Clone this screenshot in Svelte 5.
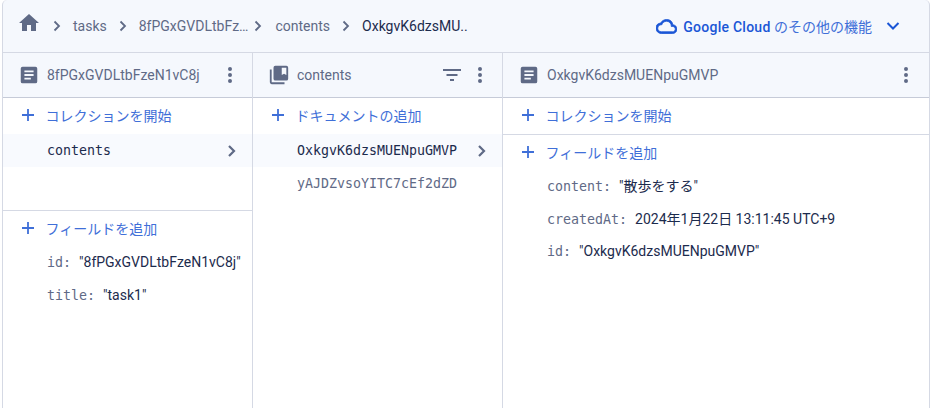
<script>
  const leftFields = [
    { key: 'id', value: '"8fPGxGVDLtbFzeN1vC8j"' },
    { key: 'title', value: '"task1"' }
  ]
  const rightFields = [
    { key: 'content', value: '"散歩をする"' },
    { key: 'createdAt', value: '2024年1月22日 13:11:45 UTC+9' },
    { key: 'id', value: '"OxkgvK6dzsMUENpuGMVP"' }
  ]
</script>

{#snippet docIcon()}
  <svg class="head-icon" width="22" height="22" viewBox="0 0 24 24"><path d="M19 3H5a2 2 0 0 0-2 2v14a2 2 0 0 0 2 2h14a2 2 0 0 0 2-2V5a2 2 0 0 0-2-2zm-5 14H7v-2h7v2zm3-4H7v-2h10v2zm0-4H7V7h10v2z" fill="#5f6a86" /></svg>
{/snippet}

{#snippet moreIcon()}
  <svg class="more" width="24" height="24" viewBox="0 0 24 24"><path d="M12 8a2 2 0 1 0 0-4 2 2 0 0 0 0 4zm0 2a2 2 0 1 0 0 4 2 2 0 0 0 0-4zm0 6a2 2 0 1 0 0 4 2 2 0 0 0 0-4z" fill="#5f6a86" /></svg>
{/snippet}

{#snippet plusIcon()}
  <svg class="plus" width="16" height="16" viewBox="0 0 16 16"><path d="M8 2v12M2 8h12" stroke="#3f6fd8" stroke-width="1.8" fill="none" /></svg>
{/snippet}

{#snippet sep(cls = '')}
  <svg class="sep {cls}" width="16" height="16" viewBox="0 0 16 16"><path d="M5.500 3.500L10 8l-4.500 4.500" stroke="#5f6a86" stroke-width="1.8" fill="none" /></svg>
{/snippet}

{#snippet rowChevron()}
  <svg width="24" height="24" viewBox="0 0 24 24"><path d="M9 7l5 5-5 5" stroke="#5f6a86" stroke-width="2.2" fill="none" /></svg>
{/snippet}

{#snippet action(label)}
  <div class="action">
    {@render plusIcon()}
    <span>{label}</span>
  </div>
{/snippet}

{#snippet fields(rows)}
  <div class="fields">
    {#each rows as row}
      <div class="field"><span class="key">{row.key}:</span><span class="value">{row.value}</span></div>
    {/each}
  </div>
{/snippet}

<div class="frame">
  <header class="crumbs">
    <svg class="home" width="24" height="24" viewBox="0 0 24 24"><path d="M10 20v-6h4v6h5v-8h3L12 3 2 12h3v8z" fill="#5f6a86" /></svg>
    {@render sep()}
    <span class="crumb">tasks</span>
    {@render sep()}
    <span class="crumb">8fPGxGVDLtbFz…</span>
    {@render sep('tight')}
    <span class="crumb">contents</span>
    {@render sep()}
    <span class="crumb current">OxkgvK6dzsMU..</span>
    <div class="cloud">
      <svg width="21" height="21" viewBox="0 0 24 24"><path d="M19.350 10.040A7.490 7.490 0 0 0 12 4C9.110 4 6.600 5.640 5.350 8.040A5.994 5.994 0 0 0 0 14c0 3.310 2.690 6 6 6h13c2.760 0 5-2.240 5-5 0-2.640-2.050-4.780-4.650-4.960zM19 18H6c-2.210 0-4-1.790-4-4s1.790-4 4-4h.710C7.370 7.690 9.480 6 12 6c3.040 0 5.500 2.460 5.500 5.500v.5H19c1.660 0 3 1.340 3 3s-1.340 3-3 3z" fill="#1a56d6" stroke="#1a56d6" stroke-width="0.9" /></svg>
      <span class="cloud-text"><b>Google Cloud</b> のその他の機能</span>
      <svg class="caret" width="24" height="24" viewBox="0 0 24 24"><path d="M6.500 9l5.500 5.500L17.500 9" stroke="#1a56d6" stroke-width="2" fill="none" /></svg>
    </div>
  </header>

  <main class="columns">
    <section class="col col-a">
      <div class="head">
        {@render docIcon()}
        <span class="head-title">8fPGxGVDLtbFzeN1vC8j</span>
        {@render moreIcon()}
      </div>
      <div class="upper">
        {@render action('コレクションを開始')}
        <div class="row selected"><span>contents</span>{@render rowChevron()}</div>
      </div>
      {@render action('フィールドを追加')}
      {@render fields(leftFields)}
    </section>

    <section class="col col-b">
      <div class="head">
        <svg class="head-icon" width="22" height="22" viewBox="0 0 24 24"><path d="M4 6H2v14a2 2 0 0 0 2 2h14v-2H4V6zm16-4H8a2 2 0 0 0-2 2v12a2 2 0 0 0 2 2h12a2 2 0 0 0 2-2V4a2 2 0 0 0-2-2zm0 10-2.500-1.500L15 12V4h5v8z" fill="#5f6a86" /></svg>
        <span class="head-title">contents</span>
        <svg class="filter" width="24" height="24" viewBox="0 0 24 24"><path d="M3 6h18v2H3zM6.500 11h11v2h-11zM10 16h4v2h-4z" fill="#5f6a86" /></svg>
        {@render moreIcon()}
      </div>
      {@render action('ドキュメントの追加')}
      <div class="row selected"><span>OxkgvK6dzsMUENpuGMVP</span>{@render rowChevron()}</div>
      <div class="row muted"><span>yAJDZvsoYITC7cEf2dZD</span></div>
    </section>

    <section class="col col-c">
      <div class="head">
        {@render docIcon()}
        <span class="head-title">OxkgvK6dzsMUENpuGMVP</span>
        {@render moreIcon()}
      </div>
      <div class="action-wrap">{@render action('コレクションを開始')}</div>
      {@render action('フィールドを追加')}
      {@render fields(rightFields)}
    </section>
  </main>
</div>

<style>
  :global(body) {
    margin: 0;
    background: #ffffff;
  }

  .frame {
    box-sizing: border-box;
    width: 932px;
    height: 408px;
    display: flex;
    flex-direction: column;
    padding: 0 2px;
    font-family: Roboto, "Noto Sans CJK JP", sans-serif;
    color: #1c2b4d;
    font-size: 14px;
    overflow: hidden;
  }

  .crumbs {
    display: flex;
    align-items: center;
    flex: 0 0 52px;
    padding: 0 24px 0 14px;
    background: #f5f8fd;
    border: 1px solid #d5d9e4;
    border-width: 0 1px 1px 1px;
    border-radius: 5px 5px 0 0;
    color: #5f6a86;
  }

  .home {
    margin-bottom: 7px;
  }

  .sep {
    margin: 0 8px;
    flex: none;
  }

  .sep.tight {
    margin-left: 2px;
    margin-right: 9px;
  }

  .crumb {
    white-space: nowrap;
  }

  .current {
    color: #1c2b4d;
  }

  .cloud {
    margin-left: auto;
    display: flex;
    align-items: center;
    color: #3f6fd8;
  }

  .cloud-text {
    margin-left: 6px;
    white-space: nowrap;
  }

  .cloud-text b {
    font-weight: 500;
    letter-spacing: 0.25px;
    color: #1a56d6;
  }

  .caret {
    margin-left: 9px;
  }

  .columns {
    flex: 1;
    display: flex;
    border-left: 1px solid #d5d9e4;
    border-right: 1px solid #d5d9e4;
  }

  .col {
    box-sizing: border-box;
    display: flex;
    flex-direction: column;
    min-width: 0;
  }

  .col-a,
  .col-b {
    flex: 0 0 250px;
    border-right: 1px solid #d5d9e4;
  }

  .col-c {
    flex: 1;
  }

  .head {
    box-sizing: border-box;
    display: flex;
    align-items: center;
    height: 45px;
    padding: 0 10px 0 15px;
    background: #f5f8fd;
    border-bottom: 1px solid #c6cbd8;
    color: #5f6a86;
  }

  .col-c .head {
    padding-right: 11px;
  }

  .head-icon {
    margin-right: 7px;
    flex: none;
  }

  .head-title {
    flex: 1;
    white-space: nowrap;
  }

  .filter {
    margin-right: 4px;
  }

  .upper {
    height: 112px;
    border-bottom: 1px solid #d5d9e4;
    flex: none;
  }

  .action-wrap {
    border-bottom: 1px solid #d5d9e4;
  }

  .action {
    box-sizing: border-box;
    display: flex;
    align-items: center;
    height: 36px;
    padding: 0 0 2px 17px;
    color: #3f6fd8;
    font-size: 14px;
  }

  .action span {
    margin-left: 9.5px;
  }

  .row {
    display: flex;
    align-items: center;
    justify-content: space-between;
    height: 33px;
    padding: 0 8px 0 44px;
    font-family: "DejaVu Sans Mono", monospace;
    font-size: 13.3px;
  }

  .selected {
    background: #f8fafe;
  }

  .muted {
    color: #5f6a86;
  }

  .fields {
    margin-top: -1px;
    padding-left: 44px;
  }

  .field {
    height: 33px;
    line-height: 33px;
    display: flex;
    align-items: baseline;
    gap: 8px;
    white-space: nowrap;
  }

  .field:nth-child(3) {
    margin-top: -1px;
  }

  .key {
    font-family: "DejaVu Sans Mono", monospace;
    font-size: 13.3px;
    color: #5f6a86;
  }
</style>
